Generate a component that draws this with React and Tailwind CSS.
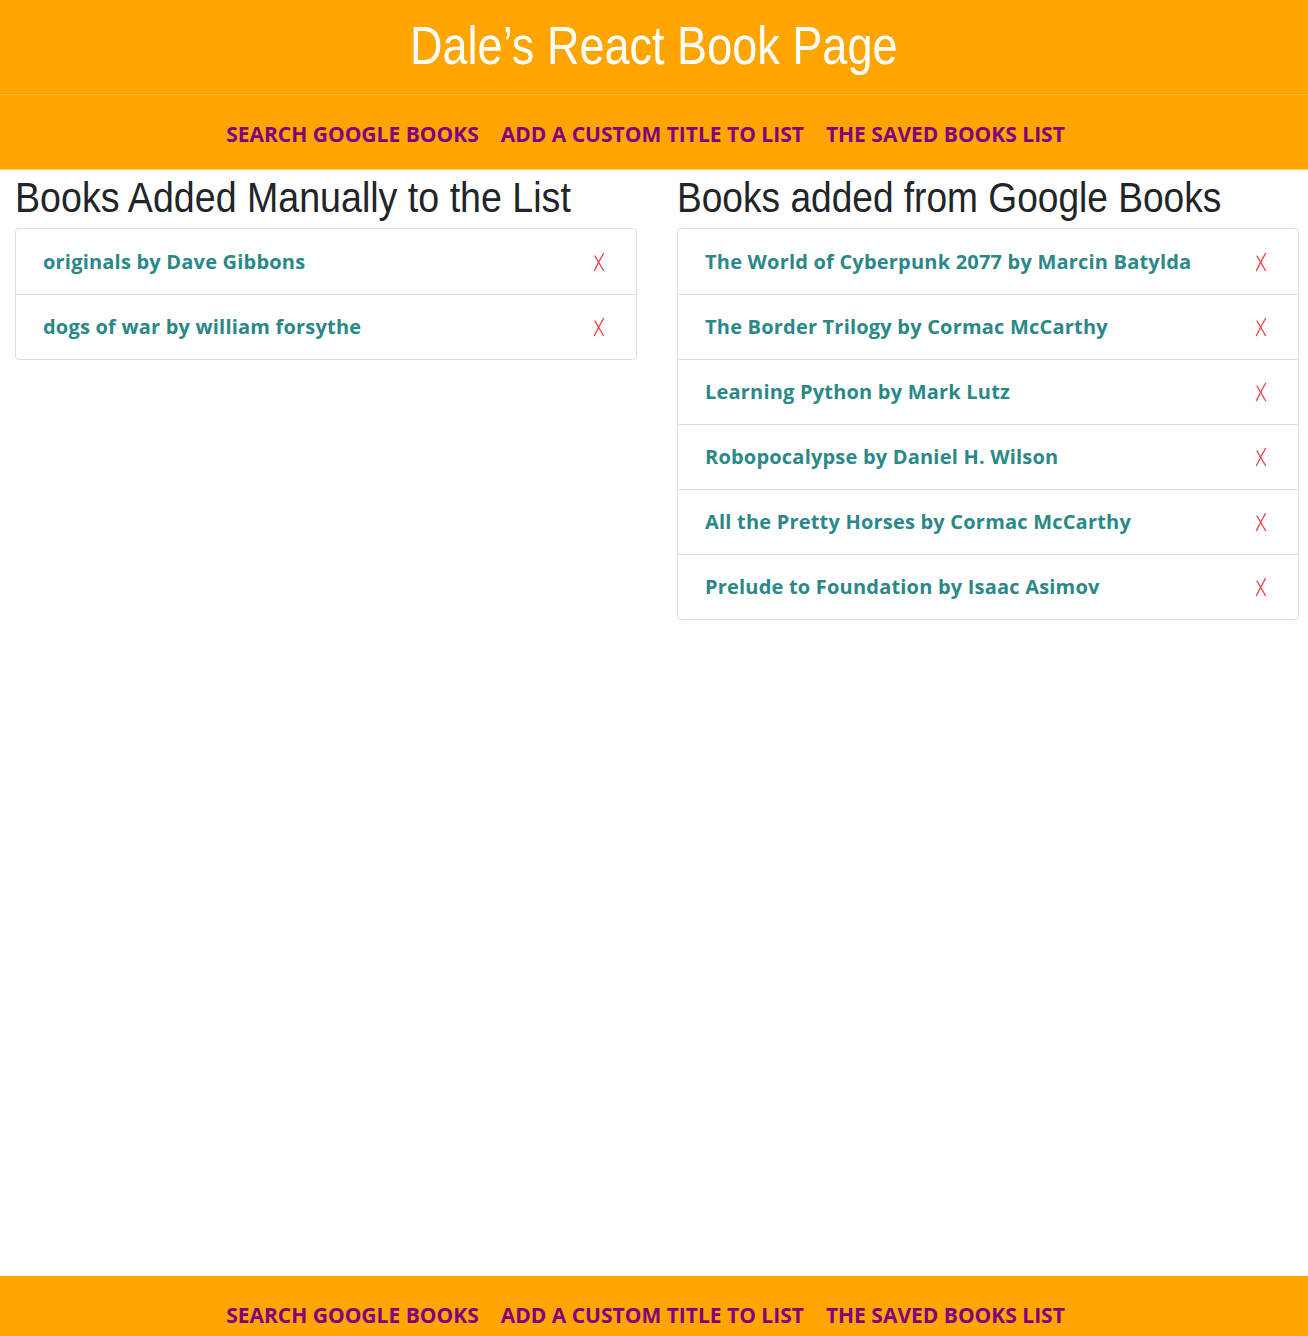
import React from "react";

const manual = ["originals by Dave Gibbons", "dogs of war by william forsythe"];

const google = [
  "The World of Cyberpunk 2077 by Marcin Batylda",
  "The Border Trilogy by Cormac McCarthy",
  "Learning Python by Mark Lutz",
  "Robopocalypse by Daniel H. Wilson",
  "All the Pretty Horses by Cormac McCarthy",
  "Prelude to Foundation by Isaac Asimov",
];

const links = ["Search Google Books", "Add a Custom Title to List", "The Saved Books List"];

function Cross() {
  return (
    <svg width="14" height="20" viewBox="0 0 14 20" fill="none" stroke="#e8474b" strokeWidth="1.4" strokeLinecap="round">
      <path d="M11.5 1.5 Q7 9 2.5 18.5" />
      <path d="M3 4 Q7 11 11.5 18.5" />
    </svg>
  );
}

function NavBar({ className }) {
  return (
    <nav className={`bg-[#ffa500] h-[75px] flex items-center justify-center gap-[22px] pt-[5px] pr-[17px] ${className}`}>
      {links.map((l) => (
        <a
          key={l}
          href="#"
          className="uppercase text-[#800080] font-bold text-[21px] font-['Open_Sans',sans-serif]"
        >
          {l}
        </a>
      ))}
    </nav>
  );
}

function BookList({ title, books, squeeze }) {
  return (
    <section className="w-[622px] shrink-0">
      <h2 className="text-[#212529] text-[42px] leading-[54px] whitespace-nowrap font-['Liberation_Sans',sans-serif] mb-[3px]">
        <span className={`inline-block origin-left ${squeeze}`}>{title}</span>
      </h2>
      <ul className="border border-[#dfdfdf] rounded-[4px]">
        {books.map((b, i) => (
          <li
            key={b}
            className={`h-[65px] flex items-center justify-between pl-[27px] pr-[30px] ${
              i > 0 ? "border-t border-[#dfdfdf]" : ""
            }`}
          >
            <span className="text-[#2a8888] font-bold text-[20px] tracking-[0.2px] font-['Open_Sans',sans-serif]">{b}</span>
            <Cross />
          </li>
        ))}
      </ul>
    </section>
  );
}

export default function App() {
  return (
    <div className="bg-white">
      <header className="bg-[#ffa500] h-[95px] flex items-center justify-center border-b border-[#ffb733]">
        <h1 className="text-white text-[53px] whitespace-nowrap font-['Liberation_Sans',sans-serif] pb-[2px]">
          <span className="inline-block scale-x-[0.85]">Dale’s React Book Page</span>
        </h1>
      </header>
      <NavBar className="border-b border-[#ffc85c]" />
      <main className="min-h-[1106px] flex gap-[40px] pl-[15px] pt-[1px]">
        <BookList title="Books Added Manually to the List" books={manual} squeeze="scale-x-[0.895]" />
        <BookList title="Books added from Google Books" books={google} squeeze="scale-x-[0.883]" />
      </main>
      <NavBar />
    </div>
  );
}
